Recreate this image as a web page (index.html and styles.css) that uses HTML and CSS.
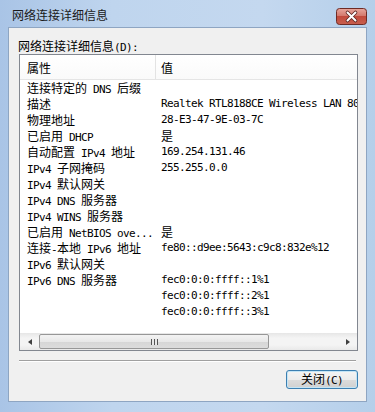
FILE: index.html
```html
<!DOCTYPE html>
<html lang="zh-CN">
<head>
    <meta charset="UTF-8">
    <title>网络连接详细信息</title>
    <link rel="stylesheet" href="styles.css">
</head>
<body>

<div class="window">
    <div class="titlebar">
        <span class="title">网络连接详细信息</span>
        <div class="close">
            <svg width="31" height="17" viewBox="0 0 31 17">
                <defs>
                    <linearGradient id="red" x1="0" y1="0" x2="0" y2="1">
                        <stop offset="0" stop-color="#e8a79d"/>
                        <stop offset="0.45" stop-color="#d47a6e"/>
                        <stop offset="0.5" stop-color="#c24a3c"/>
                        <stop offset="1" stop-color="#c8604f"/>
                    </linearGradient>
                </defs>
                <rect x="0.5" y="0.5" width="30" height="16" rx="3" fill="url(#red)" stroke="#6e2b25"/>
                <path d="M11.5 4.5 L19.5 12.5 M19.5 4.5 L11.5 12.5" stroke="#5a2420" stroke-width="3.6" stroke-linecap="round"/>
                <path d="M11.5 4.5 L19.5 12.5 M19.5 4.5 L11.5 12.5" stroke="#fff" stroke-width="2" stroke-linecap="round"/>
            </svg>
        </div>
    </div>

    <div class="client">
        <div class="label">网络连接详细信息<span class="en">(D):</span></div>

        <div class="list">
            <div class="head">
                <div class="hcell key">属性</div>
                <div class="hcell val">值</div>
            </div>
            <div class="rows">
                <div class="row"><span class="k">连接特定的<span class="en"> DNS </span>后缀</span><span class="v"></span></div>
                <div class="row"><span class="k">描述</span><span class="v en">Realtek RTL8188CE Wireless LAN 80</span></div>
                <div class="row"><span class="k">物理地址</span><span class="v en">28-E3-47-9E-03-7C</span></div>
                <div class="row"><span class="k">已启用<span class="en"> DHCP</span></span><span class="v">是</span></div>
                <div class="row"><span class="k">自动配置<span class="en"> IPv4 </span>地址</span><span class="v en">169.254.131.46</span></div>
                <div class="row"><span class="k"><span class="en">IPv4 </span>子网掩码</span><span class="v en">255.255.0.0</span></div>
                <div class="row"><span class="k"><span class="en">IPv4 </span>默认网关</span><span class="v"></span></div>
                <div class="row"><span class="k"><span class="en">IPv4 DNS </span>服务器</span><span class="v"></span></div>
                <div class="row"><span class="k"><span class="en">IPv4 WINS </span>服务器</span><span class="v"></span></div>
                <div class="row"><span class="k">已启用<span class="en"> NetBIOS ove...</span></span><span class="v">是</span></div>
                <div class="row"><span class="k">连接<span class="en">-</span>本地<span class="en"> IPv6 </span>地址</span><span class="v en">fe80::d9ee:5643:c9c8:832e%12</span></div>
                <div class="row"><span class="k"><span class="en">IPv6 </span>默认网关</span><span class="v"></span></div>
                <div class="row"><span class="k"><span class="en">IPv6 DNS </span>服务器</span><span class="v en">fec0:0:0:ffff::1%1</span></div>
                <div class="row"><span class="k"></span><span class="v en">fec0:0:0:ffff::2%1</span></div>
                <div class="row"><span class="k"></span><span class="v en">fec0:0:0:ffff::3%1</span></div>
            </div>
            <div class="hscroll">
                <div class="sbtn"><span class="arrow left"></span></div>
                <div class="thumb"><span class="grip"></span></div>
                <div class="track"></div>
                <div class="sbtn"><span class="arrow right"></span></div>
            </div>
        </div>

        <div class="sep"></div>

        <div class="actions">
            <button class="btn">关闭<span class="en">(C)</span></button>
        </div>
    </div>
</div>

</body>
</html>
```

FILE: styles.css
```css
/* окно */
body {
    margin: 0;
    font-family: "Noto Sans CJK SC", sans-serif;
    font-size: 12px;
    color: #000;
    background: #b9d1ea;
}

.window {
    width: 375px;
    height: 412px;
    box-sizing: border-box;
    padding: 0 8px 10px;
    display: flex;
    flex-direction: column;
    background: linear-gradient(90deg, #a9c4e6 0%, #bfd5ee 30%, #c4d8ef 70%, #b5cfea 100%);
}

.titlebar {
    height: 27px;
    display: flex;
    align-items: flex-start;
}

.title {
    padding: 7px 0 0 4px;
    line-height: 16px;
    color: #1a1a1a;
}

.close {
    margin: 8px 0 0 auto;
    width: 31px;
    height: 17px;
}

.close svg {
    display: block;
}

/* клиентская область */
.client {
    flex: 1;
    background: #f0f0f0;
    border: 1px solid #8ea5c2;
    padding: 10px 8px 0 10px;
    display: flex;
    flex-direction: column;
}

.en {
    font-family: "DejaVu Sans Mono", monospace;
    font-size: 11px;
    letter-spacing: -0.62px;
}

.label {
    line-height: 16px;
    height: 16px;
    margin-left: -1px;
}

/* список */
.list {
    border: 1px solid #828790;
    background: #fff;
    display: flex;
    flex-direction: column;
}

.head {
    display: flex;
    height: 24px;
    border-bottom: 1px solid #e5e5e5;
    background: linear-gradient(#ffffff, #fafafa);
}

.hcell {
    line-height: 25px;
}

.hcell.key {
    width: 128px;
    padding-left: 7px;
    border-right: 1px solid #e3e3e3;
}

.hcell.val {
    padding-left: 5px;
}

.rows {
    height: 253px;
    overflow: hidden;
    white-space: nowrap;
}

.row {
    display: flex;
    height: 16px;
    line-height: 16px;
}

.row .k {
    width: 129px;
    flex: none;
    padding-left: 7px;
    overflow: hidden;
}

.row .v {
    padding-left: 5px;
}

/* горизонтальная прокрутка */
.hscroll {
    height: 17px;
    display: flex;
    background: linear-gradient(#e6e6e6, #f4f4f4 30%, #f4f4f4 70%, #e9e9e9);
}

.sbtn {
    width: 19px;
    display: flex;
    align-items: center;
    justify-content: center;
}

.arrow {
    width: 0;
    height: 0;
    border-top: 3px solid transparent;
    border-bottom: 3px solid transparent;
}

.arrow.left {
    border-right: 4px solid #404040;
}

.arrow.right {
    border-left: 4px solid #404040;
}

.thumb {
    width: 228px;
    margin: 1px 0;
    border: 1px solid #979797;
    border-radius: 2px;
    background: linear-gradient(#f3f3f3, #e8e8e8 50%, #d6d6d6 51%, #dcdcdc);
    display: flex;
    align-items: center;
    justify-content: center;
}

.grip {
    width: 7px;
    height: 6px;
    background: repeating-linear-gradient(90deg, #555 0 1px, #e8e8e8 1px 3px);
}

.track {
    flex: 1;
}

.sep {
    margin: 9px 2px 0 0;
    height: 0;
    border-top: 1px solid #a0a0a0;
    border-bottom: 1px solid #fff;
}

.actions {
    display: flex;
    justify-content: flex-end;
    margin-top: 8px;
}

.btn {
    width: 72px;
    height: 19px;
    padding: 0;
    font-family: "Noto Sans CJK SC", sans-serif;
    font-size: 12px;
    line-height: 16px;
    color: #000;
    border: 1px solid #3c7fb1;
    border-radius: 3px;
    background: linear-gradient(#f4f4f4, #ececec 50%, #dcdcdc 51%, #d0d0d0);
    box-shadow: inset 0 0 0 1px #c4e5f6;
}
```
